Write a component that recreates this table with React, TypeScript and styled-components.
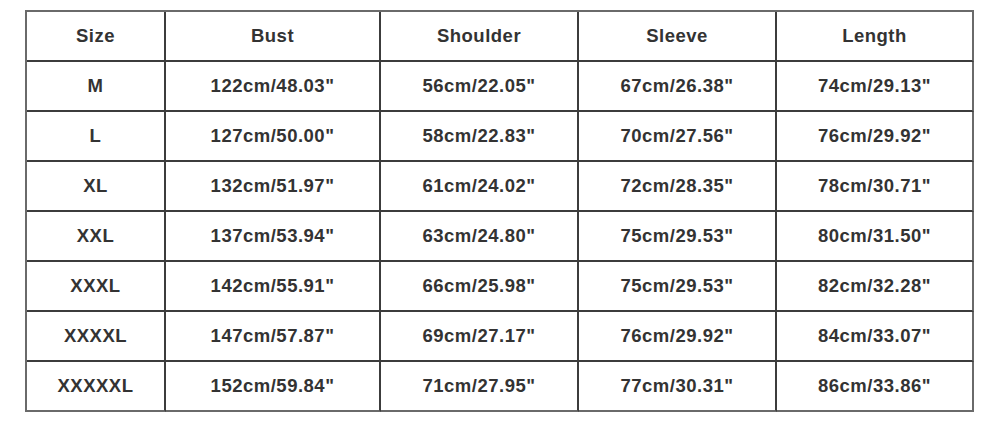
import React from "react";
import styled, { createGlobalStyle } from "styled-components";

const GlobalStyle = createGlobalStyle`
  html, body {
    margin: 0;
    padding: 0;
    background: #ffffff;
  }
`;

const Page = styled.div`
  width: 1000px;
  height: 421px;
  padding: 10px 0 0 25px;
  box-sizing: border-box;
  background: #fff;
`;

const Grid = styled.div`
  display: grid;
  grid-template-columns: 139px 215px 198px 198px 197px;
  grid-auto-rows: 50px;
  width: max-content;
  border-left: 2px solid #6a6a6a;
  border-top: 2px solid #6a6a6a;
`;

const Cell = styled.div<{ $lastCol: boolean; $lastRow: boolean }>`
  display: flex;
  align-items: center;
  justify-content: center;
  box-sizing: border-box;
  border-right: 2px solid ${({ $lastCol }) => ($lastCol ? "#6a6a6a" : "#3c3c3c")};
  border-bottom: 2px solid ${({ $lastRow }) => ($lastRow ? "#6a6a6a" : "#3c3c3c")};
  font-family: "Liberation Sans", Arial, sans-serif;
  font-weight: bold;
  font-size: 18.5px;
  letter-spacing: 0.5px;
  color: #333333;
`;

const header = ["Size", "Bust", "Shoulder", "Sleeve", "Length"];

const rows = [
  ["M", "122cm/48.03\"", "56cm/22.05\"", "67cm/26.38\"", "74cm/29.13\""],
  ["L", "127cm/50.00\"", "58cm/22.83\"", "70cm/27.56\"", "76cm/29.92\""],
  ["XL", "132cm/51.97\"", "61cm/24.02\"", "72cm/28.35\"", "78cm/30.71\""],
  ["XXL", "137cm/53.94\"", "63cm/24.80\"", "75cm/29.53\"", "80cm/31.50\""],
  ["XXXL", "142cm/55.91\"", "66cm/25.98\"", "75cm/29.53\"", "82cm/32.28\""],
  ["XXXXL", "147cm/57.87\"", "69cm/27.17\"", "76cm/29.92\"", "84cm/33.07\""],
  ["XXXXXL", "152cm/59.84\"", "71cm/27.95\"", "77cm/30.31\"", "86cm/33.86\""],
];

export default function App() {
  const all = [header, ...rows];
  return (
    <>
      <GlobalStyle />
      <Page>
        <Grid>
          {all.map((row, r) =>
            row.map((text, c) => (
              <Cell
                key={`${r}-${c}`}
                $lastCol={c === row.length - 1}
                $lastRow={r === all.length - 1}
              >
                {text}
              </Cell>
            ))
          )}
        </Grid>
      </Page>
    </>
  );
}
